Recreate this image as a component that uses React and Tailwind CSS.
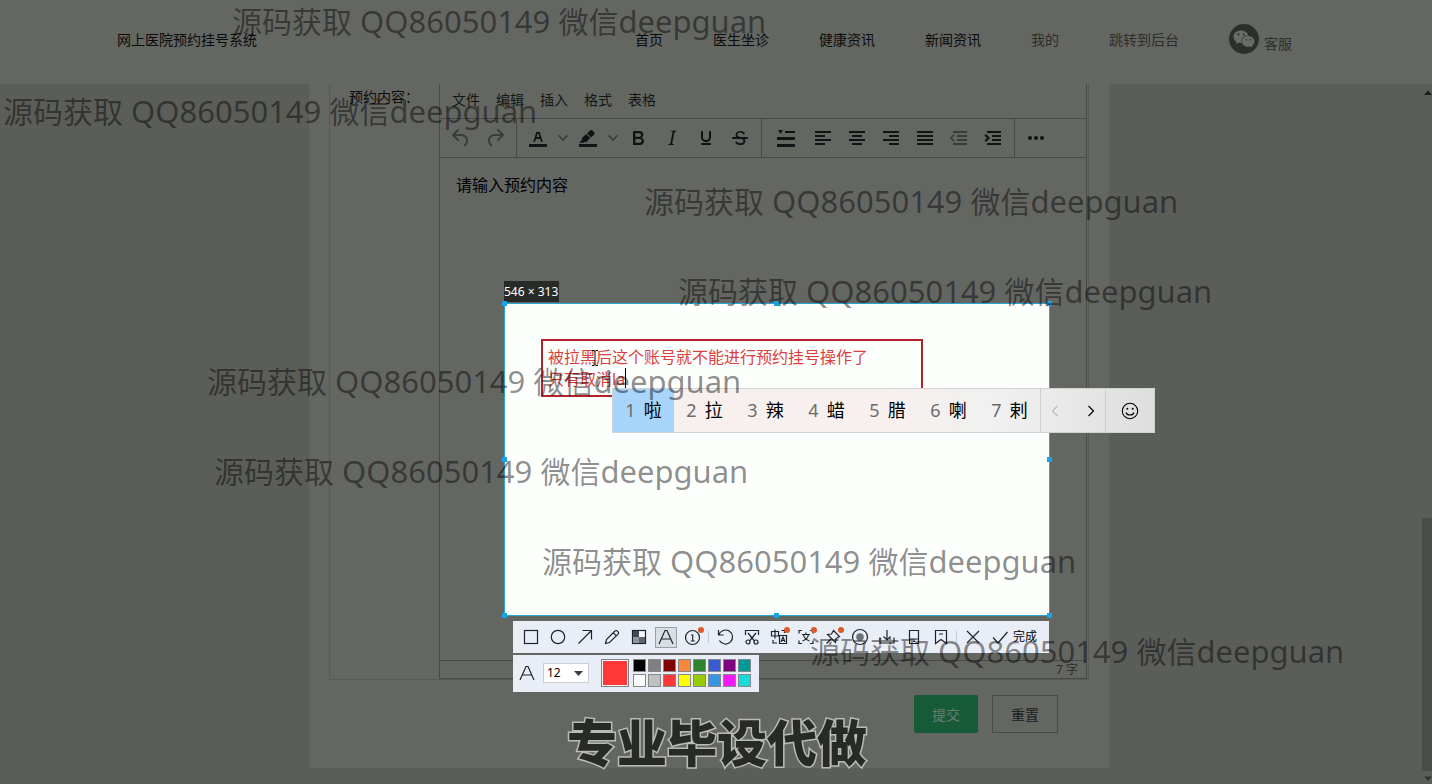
import { FaWeixin } from "react-icons/fa";

const NAV = [
  { text: "首页" },
  { text: "医生坐诊" },
  { text: "健康资讯" },
  { text: "新闻资讯" },
  { text: "我的", dim: true },
  { text: "跳转到后台", dim: true },
];

const MENUS = ["文件", "编辑", "插入", "格式", "表格"];

const WATERMARKS = [
  "left-[232px] top-0",
  "left-[3px] top-[90px]",
  "left-[644px] top-[180px]",
  "left-[678px] top-[270px]",
  "left-[207px] top-[360px]",
  "left-[214px] top-[450px]",
  "left-[542px] top-[540px]",
  "left-[810px] top-[630px]",
];

const CANDIDATES = ["啦", "拉", "辣", "蜡", "腊", "喇", "剌"];

const SWATCHES = [
  ["黑色", "bg-black"],
  ["灰色", "bg-[#808080]"],
  ["深红", "bg-[#800000]"],
  ["橙色", "bg-[#f7883a]"],
  ["绿色", "bg-[#308430]"],
  ["蓝色", "bg-[#385ad3]"],
  ["紫色", "bg-[#800080]"],
  ["青色", "bg-[#009999]"],
  ["白色", "bg-white"],
  ["浅灰", "bg-[#c0c0c0]"],
  ["红色", "bg-[#fb3838]"],
  ["黄色", "bg-[#ffff00]"],
  ["黄绿", "bg-[#99cc00]"],
  ["天蓝", "bg-[#3894e4]"],
  ["品红", "bg-[#f31bf3]"],
  ["浅青", "bg-[#16dcdc]"],
];

const ED = {
  undo: "M6.4 8H12c3.7 0 6.2 2 6.8 5.1.6 2.7-.4 5.6-2.3 6.8a1 1 0 0 1-1-1.8c1.1-.6 1.8-2.7 1.4-4.6-.5-2.1-2.1-3.5-4.9-3.5H6.4l3.3 3.3a1 1 0 1 1-1.4 1.4l-5-5a1 1 0 0 1 0-1.4l5-5a1 1 0 0 1 1.4 1.4L6.4 8z",
  redo: "M17.6 10H12c-2.8 0-4.4 1.4-4.9 3.5-.4 2 .3 4 1.4 4.6a1 1 0 1 1-1 1.8c-2-1.2-2.9-4.1-2.3-6.8.6-3 3-5.1 6.8-5.1h5.6l-3.3-3.3a1 1 0 1 1 1.4-1.4l5 5a1 1 0 0 1 0 1.4l-5 5a1 1 0 0 1-1.4-1.4l3.3-3.3z",
  color:
    "M3 18h18v3H3zM8.7 16h-.8a.5.5 0 0 1-.5-.6l2.7-9c.1-.3.3-.4.5-.4h2.8c.2 0 .4.1.5.4l2.7 9a.5.5 0 0 1-.5.6h-.8a.5.5 0 0 1-.4-.4l-.7-2.2c0-.3-.3-.4-.5-.4h-3.4c-.2 0-.4.1-.5.4l-.7 2.2c0 .3-.2.4-.4.4zm2.6-7.6-.6 2a.5.5 0 0 0 .5.6h1.6a.5.5 0 0 0 .5-.6l-.6-2c0-.3-.3-.4-.5-.4h-.4c-.2 0-.4.1-.5.4z",
  mark: "M3 18h18v3H3zM7.7 16.7H3l3.3-3.3-.7-.8L10.2 8l4 4.1-4 4.2c-.2.2-.6.2-.8 0l-.6-.7-1.1 1.1zm5-7.5L11 7.4l3-2.9a2 2 0 0 1 2.6 0L18 6c.7.7.7 2 0 2.7l-2.9 2.9-1.8-1.8-.5-.6",
  bold: "M7.8 19c-.3 0-.5 0-.6-.2l-.2-.5V5.7c0-.2 0-.4.2-.5l.6-.2h5c1.5 0 2.7.3 3.5 1 .7.6 1.1 1.4 1.1 2.5a3 3 0 0 1-.6 1.9c-.4.6-1 1-1.6 1.2.4.1.9.3 1.3.6s.8.7 1 1.2c.4.4.5 1 .5 1.6 0 1.3-.4 2.3-1.3 3-.8.7-2.1 1-3.8 1H7.8zm5-8.3c.6 0 1.2-.1 1.6-.5.4-.3.6-.7.6-1.3 0-1.1-.8-1.7-2.3-1.7H9.3v3.5h3.4zm.5 6c.7 0 1.3-.1 1.7-.4.4-.4.6-.9.6-1.5s-.2-1-.7-1.4c-.4-.3-1-.4-2-.4H9.4v3.8h4z",
  italic:
    "M16.7 4.7l-.1.9h-.3c-.6 0-1 0-1.4.3-.3.3-.4.6-.5 1.1l-2.1 9.8v.6c0 .5.4.8 1.4.8h.2l-.2.8H8l.2-.8h.2c1.1 0 1.8-.5 2-1.5l2-9.8.1-.5c0-.6-.4-.8-1.4-.8h-.3l.2-.9h5.8z",
  underline:
    "M16 5c.6 0 1 .4 1 1v5.5a4 4 0 0 1-.4 1.8l-1 1.4a5.3 5.3 0 0 1-5.5 1 5 5 0 0 1-1.6-1c-.5-.4-.8-.9-1.1-1.4a4 4 0 0 1-.4-1.8V6c0-.6.4-1 1-1s1 .4 1 1v5.5c0 .3 0 .6.2 1l.6.7a3.3 3.3 0 0 0 2.2.8 3.4 3.4 0 0 0 2.2-.8c.3-.2.4-.5.6-.8l.2-.9V6c0-.6.4-1 1-1zM8 17h8c.6 0 1 .4 1 1s-.4 1-1 1H8a1 1 0 0 1 0-2z",
  strike:
    "M15.6 8.5c-.5-.7-1-1.1-1.3-1.3-.6-.4-1.3-.6-2-.6-2.7 0-2.8 1.7-2.8 2.1 0 1.6 1.8 2 3.2 2.3 4.4.9 4.6 2.8 4.6 3.9 0 1.4-.7 4.1-5 4.1A6.2 6.2 0 0 1 7 16.4l1.5-1.1c.4.6 1.6 2 3.7 2 1.6 0 2.5-.4 3-1.2.4-.8.3-2-.8-2.6-.7-.4-1.6-.7-2.9-1-1-.2-3.9-.8-3.9-3.6C7.6 6 10.3 5 12.4 5c2.9 0 4.2 1.6 4.7 2.4l-1.5 1.1zM5 11h14a1 1 0 0 1 0 2H5a1 1 0 0 1 0-2z",
  left: "M4 5h16v2H4zM4 9h10v2H4zM4 13h16v2H4zM4 17h10v2H4z",
  center: "M4 5h16v2H4zM7 9h10v2H7zM4 13h16v2H4zM7 17h10v2H7z",
  right: "M4 5h16v2H4zM10 9h10v2H10zM4 13h16v2H4zM10 17h10v2H10z",
  justify: "M4 5h16v2H4zM4 9h16v2H4zM4 13h16v2H4zM4 17h16v2H4z",
  outdent: "M6 5h14v2H6zM10 9h10v2H10zM10 13h10v2H10zM6 17h14v2H6zM7.500 9.200 5 12l2.500 2.800-1.200 1L3 12l3.300-3.800z",
  indent: "M6 5h14v2H6zM11 9h9v2h-9zM11 13h9v2h-9zM6 17h14v2H6zM5 8l4 4-4 4-1.500-1.500L6 12 3.500 9.500z",
  line: "M4 4h5L6.500 8zM11 5h10v2H11zM3 11h18v3H3zM3 18h18v3H3z",
};

function EdButton({ label, d, dim, wide }) {
  return (
    <button type="button" aria-label={label} className={`flex h-[34px] items-center justify-center ${wide ? "w-10" : "w-[34px]"}`}>
      <svg viewBox="0 0 24 24" className={`h-6 w-6 ${dim ? "fill-[#3a3d3b]" : "fill-[#101415]"}`}>
        <path d={d} />
      </svg>
    </button>
  );
}

function EdChevron({ label }) {
  return (
    <button type="button" aria-label={label} className="flex h-[34px] w-4 items-center justify-center">
      <svg viewBox="0 0 10 10" className="h-[10px] w-[10px] fill-none stroke-[#343735]">
        <path d="M.7 2.500 5 7l4.300-4.500" strokeWidth="1.300" />
      </svg>
    </button>
  );
}

const TOOLS = [
  ["矩形", <rect key="a" x="3.500" y="3.500" width="13" height="13" />],
  ["椭圆", <circle key="a" cx="10" cy="10" r="6.700" />],
  ["箭头", <path key="a" d="M3.500 16.500 16.500 3.500M7.500 3.500h9v9" />],
  ["画笔", <path key="a" d="M3.500 16.500 4.500 12.500 13 4a1.500 1.500 0 0 1 2.200 0l.9.900a1.500 1.500 0 0 1 0 2.200L7.500 15.500zM11.300 5.800l3 3" />],
  [
    "马赛克",
    <g key="a">
      <rect x="3.500" y="3.500" width="13" height="13" fill="#f4f6fa" />
      <path d="M4 4h6v6H4z" fill="#43474f" stroke="none" />
      <path d="M10 10h6v6h-6zM4 10h6v6H4z" fill="#8e939c" stroke="none" />
      <path d="M10 10h6v6h-6z" fill="#5d626b" stroke="none" />
    </g>,
  ],
  ["文字", <path key="a" d="M3 17 9 3.500h2L17 17M5.300 12h9.400" />, "active"],
  [
    "序号",
    <g key="a">
      <circle cx="9.500" cy="10.500" r="7" />
      <path d="M8 8h1.700v6M7.800 14h4" />
    </g>,
    "dot",
  ],
  "sep",
  ["撤销", <path key="a" d="M3.500 3v5h5M3.800 8a7 7 0 1 1 .6 5.500" />],
  [
    "裁剪",
    <g key="a">
      <path d="M3.500 8V3.500h13V8M6 6l6.500 8M14 6l-6.500 8" />
      <circle cx="6" cy="15" r="2" />
      <circle cx="14" cy="15" r="2" />
    </g>,
  ],
  [
    "翻译",
    <g key="a">
      <path d="M2.500 4.500h7v4.500h-7zM6 2.500v9" />
      <path d="M10.500 8.500h7v8h-7zM12 15l2-5 2 5M12.600 13.500h2.800M4 13v3h4M12.500 3.500h3V6" />
    </g>,
    "dot",
  ],
  ["识别文字", <path key="a" d="M3 6.500V3.500h3M14 3.500h3v3M17 13.500v3h-3M6 16.500H3v-3M6 7.500h8M10 5.500v2M12.500 7.500c-.5 3-3 5.500-6 6.500M7.500 7.500c.5 3 3 5.500 6 6.500" />, "dot"],
  ["钉住", <path key="a" d="m10.500 3.500 6 6-3.500 2-.5 4-8-8 4-.5zM8 12l-4.500 4.500" />, "dot"],
  [
    "录制",
    <g key="a">
      <circle cx="10" cy="10" r="7.500" />
      <circle cx="10" cy="10" r="3.800" fill="#6d7178" stroke="none" />
    </g>,
  ],
  ["保存", <path key="a" d="M10 3v9.500M6.500 9.500 10 13l3.500-3.500M3 10.500V16h14v-5.500" />],
  ["发送到手机", <path key="a" d="M5.500 3.500h9v13h-9zM5.500 12h9M9 14.500h2" />],
  ["收藏", <path key="a" d="M4.500 3.500h11v13L10 12.500l-5.500 4zM8 7h4" />],
  "sep",
  ["取消", <path key="a" d="m4 4 12 12M16 4 4 16" />],
];

function ShotTool({ label, icon, state }) {
  return (
    <button type="button" aria-label={label} className="relative flex w-[27px] items-center justify-center">
      <span className={`flex h-[21px] w-[22px] items-center justify-center ${state === "active" ? "border border-[#9a9ea5] bg-[#dadfe6]" : ""}`}>
        <svg viewBox="0 0 20 20" className="h-5 w-5 shrink-0 fill-none stroke-[#1f2229] [stroke-width:1.2]">
          {icon}
        </svg>
      </span>
      {state === "dot" && <span className="absolute top-1.5 right-0.5 h-1.5 w-1.5 rounded-full bg-[#dd5a28]" />}
    </button>
  );
}

function Handle({ place }) {
  return <span className={`absolute h-[5px] w-[5px] bg-[#1aa3e0] ${place}`} />;
}

function Selection() {
  return (
    <section aria-label="截图选区" className="absolute top-[303px] left-[504px] h-[313px] w-[546px] border border-[#2aa5d8] bg-[#fdfffd]">
      <span className="absolute -top-[23px] -left-px bg-[#282a28] pr-px text-[12px] leading-[21px] whitespace-nowrap text-white">546 × 313</span>
      <Handle place="-top-[3px] -left-[3px]" />
      <Handle place="-top-[3px] left-[269px]" />
      <Handle place="-top-[3px] -right-[3px]" />
      <Handle place="top-[153px] -left-[3px]" />
      <Handle place="top-[153px] -right-[3px]" />
      <Handle place="-bottom-[3px] -left-[3px]" />
      <Handle place="-bottom-[3px] left-[269px]" />
      <Handle place="-right-[3px] -bottom-[3px]" />

      <div className="absolute top-[35px] left-9 w-[382px] border-2 border-[#b3242a] p-[5px] text-[16px] leading-[22px] text-[#dc3f40]">
        <p>被拉黑后这个账号就不能进行预约挂号操作了</p>
        <p className="flex">
          只有取消la
          <span className="h-[22px] w-px bg-black" />
        </p>
      </div>
      <svg viewBox="0 0 8 16" className="absolute top-[46px] left-[86px] h-4 w-2 fill-none stroke-black">
        <path d="M1 .5h2.200L4 1.300 4.800.5H7M4 1v14M1 15.500h2.200l.8-.8.8.8H7" />
      </svg>
    </section>
  );
}

function ImeBar() {
  return (
    <section
      aria-label="输入法候选"
      className="absolute top-[388px] left-[612px] flex h-[45px] border border-[#d0d3d2] bg-linear-to-r from-[#f7f0ee] from-50% via-[#f0f1f0] via-70% to-[#dddfdd] text-[18px]"
    >
      {CANDIDATES.map((c, i) => (
        <button key={c} type="button" className={`flex w-[61px] items-center justify-center gap-2 text-black ${i === 0 ? "bg-[#a8d5fb]" : ""}`}>
          <span className="text-[#6b6b6b]">{i + 1}</span>
          {c}
        </button>
      ))}
      <div className="flex w-[66px] justify-between border-x border-[#cccfcd] px-0.5">
        <button type="button" aria-label="上一页" className="px-2">
          <svg viewBox="0 0 8 12" className="h-3 w-2 fill-none stroke-[#9a9c9b]">
            <path d="M6.500 1 1.500 6l5 5" />
          </svg>
        </button>
        <button type="button" aria-label="下一页" className="px-2">
          <svg viewBox="0 0 8 12" className="h-3 w-2 fill-none stroke-black">
            <path d="m1.500 1 5 5-5 5" strokeWidth="1.200" />
          </svg>
        </button>
      </div>
      <button type="button" aria-label="表情" className="flex w-12 items-center justify-center">
        <svg viewBox="0 0 18 18" className="h-[18px] w-[18px] fill-none stroke-black">
          <circle cx="9" cy="9" r="7.700" strokeWidth="1.100" />
          <path d="M5 10.500c1 3.300 7 3.300 8 0" strokeWidth="1.100" />
          <circle cx="6.300" cy="6.800" r="1" fill="black" stroke="none" />
          <circle cx="11.700" cy="6.800" r="1" fill="black" stroke="none" />
        </svg>
      </button>
    </section>
  );
}

function ShotToolbar() {
  return (
    <section aria-label="截图工具" className="absolute top-[621px] left-[513px] flex flex-col items-start gap-0.5">
      <div className="flex h-8 bg-[#e9eef6] pr-3 pl-1">
        {TOOLS.map((t, i) =>
          t === "sep" ? (
            <span key={i} className="mx-0.5 my-2.5 w-px bg-[#c6cad1]" />
          ) : (
            <ShotTool key={i} label={t[0]} icon={t[1]} state={t[2]} />
          ),
        )}
        <button type="button" className="flex items-center gap-1 pl-[5px] text-[12px] text-black">
          <svg viewBox="0 0 18 18" className="h-[18px] w-[18px] fill-none stroke-[#1f2229] [stroke-width:1.2]">
            <path d="m2 9.500 5 5.500L16.500 4" />
          </svg>
          完成
        </button>
      </div>
      <div className="flex h-[37px] items-center bg-[#e9eef6] pr-2 pb-px pl-1">
        <svg viewBox="0 0 20 20" className="h-5 w-5 fill-none stroke-[#1f2229] [stroke-width:1.2]">
          <path d="M3 17 9 3.500h2L17 17M5.300 12h9.400" />
        </svg>
        <label className="relative ml-1.5 flex">
          <span className="sr-only">字号</span>
          <select defaultValue="12" className="h-5 w-[46px] appearance-none border border-[#c9ced6] bg-white pl-[3px] text-[12px] leading-[18px] text-black">
            <option value="12">12</option>
            <option value="16">16</option>
            <option value="20">20</option>
          </select>
          <svg viewBox="0 0 9 5" className="pointer-events-none absolute top-2 right-1.5 h-[5px] w-[9px] fill-[#3a3d42]">
            <path d="M0 0h9L4.500 5z" />
          </svg>
        </label>
        <button type="button" aria-label="当前颜色：红色" className="ml-3 h-7 w-7 border border-[#7f8287] bg-[#ff3737] shadow-[inset_0_0_0_1px_#f3f5f8]" />
        <div className="ml-1 grid grid-cols-8 gap-x-0.5 gap-y-0.5">
          {SWATCHES.map(([name, tone]) => (
            <button key={name} type="button" aria-label={name} className={`h-[13px] w-[13px] border border-[#85888d] ${tone}`} />
          ))}
        </div>
      </div>
    </section>
  );
}

export default function App() {
  return (
    <div className="relative flex min-h-screen flex-col overflow-hidden bg-[#5b5d59] font-['Noto_Sans','Noto_Sans_CJK_SC',sans-serif] text-[14px] text-[#0b0c0b]">
      <header className="flex h-[84px] items-center justify-between bg-[#646662] pr-[140px] pb-1.5 pl-[117px]">
        <h1 className="whitespace-nowrap">网上医院预约挂号系统</h1>
        <nav className="flex items-center gap-[50px] whitespace-nowrap">
          {NAV.map((n) => (
            <a key={n.text} href="#" className={n.dim ? "text-[#2c2e2c]" : ""}>
              {n.text}
            </a>
          ))}
          <a href="#" className="flex items-end gap-[5px] text-[#2c2e2c]">
            <span className="flex h-[30px] w-[30px] items-center justify-center rounded-full bg-[#2d2f2d] text-[#6a6c68]">
              <FaWeixin className="h-[22px] w-[22px]" />
            </span>
            <span className="leading-5">客服</span>
          </a>
        </nav>
      </header>

      <div className="flex flex-1">
        <main className="flex flex-1 justify-center pb-4">
          <form className="flex w-[800px] flex-col bg-[#646662] px-5 pb-[35px]">
            <div className="flex flex-1 border-x border-b border-[#585a57]">
              <label htmlFor="content" className="w-[109px] pt-[3px] pl-[19px] leading-5">
                预约内容：
              </label>
              <div className="mr-px flex flex-1 flex-col border-x border-b border-[#484a47]">
                <div className="flex h-[34px] items-center gap-4 pb-0.5 pl-3 text-[#121616]">
                  {MENUS.map((m) => (
                    <button key={m} type="button" className="leading-5">
                      {m}
                    </button>
                  ))}
                </div>
                <div className="flex h-10 items-stretch border-y border-[#484a47]">
                  <div className="flex items-center border-r border-[#484a47] px-1">
                    <EdButton label="撤销" d={ED.undo} dim />
                    <EdButton label="重做" d={ED.redo} dim />
                  </div>
                  <div className="flex items-center border-r border-[#484a47] px-1">
                    <EdButton label="文字颜色" d={ED.color} />
                    <EdChevron label="选择文字颜色" />
                    <EdButton label="背景颜色" d={ED.mark} />
                    <EdChevron label="选择背景颜色" />
                    <EdButton label="粗体" d={ED.bold} />
                    <EdButton label="斜体" d={ED.italic} />
                    <EdButton label="下划线" d={ED.underline} />
                    <EdButton label="删除线" d={ED.strike} />
                  </div>
                  <div className="flex items-center border-r border-[#484a47] px-1">
                    <EdButton label="行高" d={ED.line} wide />
                    <EdButton label="左对齐" d={ED.left} />
                    <EdButton label="居中对齐" d={ED.center} />
                    <EdButton label="右对齐" d={ED.right} />
                    <EdButton label="两端对齐" d={ED.justify} />
                    <EdButton label="减少缩进" d={ED.outdent} dim />
                    <EdButton label="增加缩进" d={ED.indent} />
                  </div>
                  <div className="flex items-center px-1">
                    <EdButton
                      label="更多"
                      d="M6 10a2 2 0 1 0 0 4 2 2 0 0 0 0-4zm6 0a2 2 0 1 0 0 4 2 2 0 0 0 0-4zm6 0a2 2 0 1 0 0 4 2 2 0 0 0 0-4z"
                    />
                  </div>
                </div>
                <textarea
                  id="content"
                  defaultValue="请输入预约内容"
                  className="flex-1 resize-none bg-transparent px-4 py-[15px] text-[16px] leading-6 text-black outline-none"
                />
                <div className="flex h-[18px] items-center justify-end border-t border-[#484a47] pr-2 text-[12px] text-[#2a2c2a]">7 字</div>
              </div>
            </div>
            <div className="mt-[15px] flex justify-end gap-3.5 pr-[31px]">
              <button type="submit" className="h-[38px] w-16 rounded-xs bg-[#175a38] text-[#6b7d70]">
                提交
              </button>
              <button type="reset" className="h-[38px] w-[66px] border border-[#484a47] text-[#1c1e1c]">
                重置
              </button>
            </div>
          </form>
        </main>
        <div aria-hidden="true" className="flex w-[14px] flex-col items-end">
          <svg viewBox="0 0 10 18" className="h-[18px] w-[10px] fill-[#1d1f1d]">
            <path d="M2 11h8L6 6.500z" />
          </svg>
          <span className="flex-1" />
          <span className="h-[253px] w-[10px] bg-[#4a4c49]" />
          <svg viewBox="0 0 10 14" className="h-[13px] w-[10px] fill-[#30322f]">
            <path d="M2 6h8l-4 4.500z" />
          </svg>
        </div>
      </div>

      <Selection />
      <ShotToolbar />
      <ImeBar />

      <p className="pointer-events-none absolute top-[708px] left-[567px] text-[50px] leading-[70px] font-black whitespace-nowrap text-[#282a28] [-webkit-text-stroke:3px_#b9bbb8] [paint-order:stroke_fill]">
        专业毕设代做
      </p>

      {WATERMARKS.map((place) => (
        <p key={place} className={`pointer-events-none absolute text-[30px] leading-[42px] whitespace-nowrap text-black/45 ${place}`}>
          源码获取<span className="text-[31px]"> QQ86050149 </span>微信<span className="text-[31px]">deepguan</span>
        </p>
      ))}
    </div>
  );
}
